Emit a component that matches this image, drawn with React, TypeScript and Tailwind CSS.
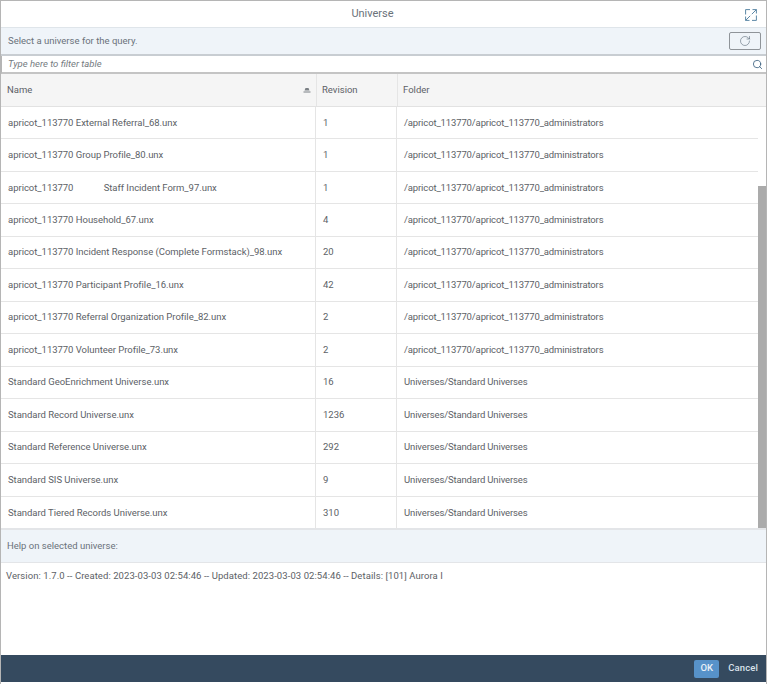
import { RotateCw, Search } from 'lucide-react';

const admin = '/apricot_113770/apricot_113770_administrators';
const std = 'Universes/Standard Universes';

const rows = [
  { name: 'apricot_113770 External Referral_68.unx', rev: '1', folder: admin },
  { name: 'apricot_113770 Group Profile_80.unx', rev: '1', folder: admin },
  { name: 'apricot_113770             Staff Incident Form_97.unx', rev: '1', folder: admin },
  { name: 'apricot_113770 Household_67.unx', rev: '4', folder: admin },
  { name: 'apricot_113770 Incident Response (Complete Formstack)_98.unx', rev: '20', folder: admin },
  { name: 'apricot_113770 Participant Profile_16.unx', rev: '42', folder: admin },
  { name: 'apricot_113770 Referral Organization Profile_82.unx', rev: '2', folder: admin },
  { name: 'apricot_113770 Volunteer Profile_73.unx', rev: '2', folder: admin },
  { name: 'Standard GeoEnrichment Universe.unx', rev: '16', folder: std },
  { name: 'Standard Record Universe.unx', rev: '1236', folder: std },
  { name: 'Standard Reference Universe.unx', rev: '292', folder: std },
  { name: 'Standard SIS Universe.unx', rev: '9', folder: std },
  { name: 'Standard Tiered Records Universe.unx', rev: '310', folder: std },
];

const App = () => {
  return (
    <div className="w-[767px] h-[684px] bg-white flex flex-col border border-b-0 border-[#b5b5b5] text-[9.5px] text-[#5c6166] font-['Roboto','Liberation_Sans',sans-serif]">
      {/* Title */}
      <div className="h-[27px] shrink-0 flex items-center justify-center relative pr-[22px] pt-[1px] border-b border-[#dfe5ea]">
        <span className="text-[11px] text-[#6a727a]">Universe</span>
        <svg width="12" height="12" viewBox="0 0 12 12" fill="none" stroke="#4a7a9c" strokeWidth="0.9" className="absolute right-[9px] top-[8px]">
          <path d="M0.6 5.5V0.6H5 M11.4 6.5V11.4H7 M7.5 0.6h3.9v3.9 M11.4 0.6 6.8 5.2 M4.5 11.4H0.6V7.5 M0.6 11.4 5.2 6.8" />
        </svg>
      </div>

      {/* Select bar */}
      <div className="h-[28px] shrink-0 flex items-center justify-between pl-[7px] pr-[5px] bg-[#eff4f9] border-b-2 border-[#c8cdd2]">
        <span className="text-[#6a727a]">Select a universe for the query.</span>
        <button className="w-[32px] h-[18px] flex items-center justify-center border border-[#8f9499] rounded-[2px]">
          <RotateCw className="w-[12px] h-[12px] text-[#4f5f6e]" strokeWidth={1.1} />
        </button>
      </div>

      {/* Filter */}
      <div className="h-[18px] shrink-0 flex items-center justify-between pl-[6px] pr-[3px] pt-[1px] border-l border-[#b5b5b5] border-b-2 border-b-[#c4c4c4]">
        <span className="italic text-[#757b81]">Type here to filter table</span>
        <Search className="w-[11px] h-[11px] text-[#2f5678]" strokeWidth={1.7} />
      </div>

      {/* Header */}
      <div className="h-[33px] shrink-0 grid grid-cols-[316px_81px_1fr] bg-[#f5f5f5] border-b border-[#e2e2e2]">
        <div className="flex items-center justify-between pl-[6px] pr-[5px] border-r border-[#e5e5e5]">
          <span>Name</span>
          <svg width="8" height="5" viewBox="0 0 8 5" className="text-[#7b8085]">
            <path d="M2.5 0h3l1 2.5h-5z M0.5 3.5h7v1h-7z" fill="currentColor" />
          </svg>
        </div>
        <div className="flex items-center pl-[5px] border-r border-[#e5e5e5]">Revision</div>
        <div className="flex items-center pl-[5px]">Folder</div>
      </div>

      {/* Rows */}
      <div className="h-[423px] shrink-0 flex border-b-2 border-[#e3e5e8]">
        <div className="w-[757px] shrink-0 flex flex-col">
          {rows.map((row) => (
            <div key={row.name} className="h-[32.47px] shrink-0 grid grid-cols-[315px_81px_1fr] border-b border-[#e5e5e5] last:border-b-0">
              <div className="flex items-center pl-[7px] border-r border-[#e5e5e5] whitespace-pre tracking-[-0.03px]">{row.name}</div>
              <div className="flex items-center pl-[7px] border-r border-[#e5e5e5]">{row.rev}</div>
              <div className="flex items-center pl-[7px] tracking-[-0.13px]">{row.folder}</div>
            </div>
          ))}
        </div>
        <div className="flex-1 flex flex-col">
          <div className="h-[79px] shrink-0" />
          <div className="flex-1 bg-[#ababab]" />
        </div>
      </div>

      {/* Help */}
      <div className="h-[33px] shrink-0 flex items-center pl-[6px] bg-[#eff4f9] border-b border-[#e3e5e8] text-[#6a727a]">
        Help on selected universe:
      </div>
      <div className="flex-1 pl-[5px] pt-[6px] tracking-[0.07px]">
        Version: 1.7.0 -- Created: 2023-03-03 02:54:46 -- Updated: 2023-03-03 02:54:46 -- Details: [101] Aurora I
      </div>

      {/* Footer */}
      <div className="h-[27px] shrink-0 mb-[2px] flex items-center justify-end gap-[9px] pr-[8px] bg-[#354a5f]">
        <button className="w-[25px] h-[18px] bg-[#5792c9] rounded-[2px] text-[#e8f0f7] font-medium">OK</button>
        <button className="text-[#d9e2ea] font-medium tracking-[0.1px]">Cancel</button>
      </div>
    </div>
  );
};

export default App;
